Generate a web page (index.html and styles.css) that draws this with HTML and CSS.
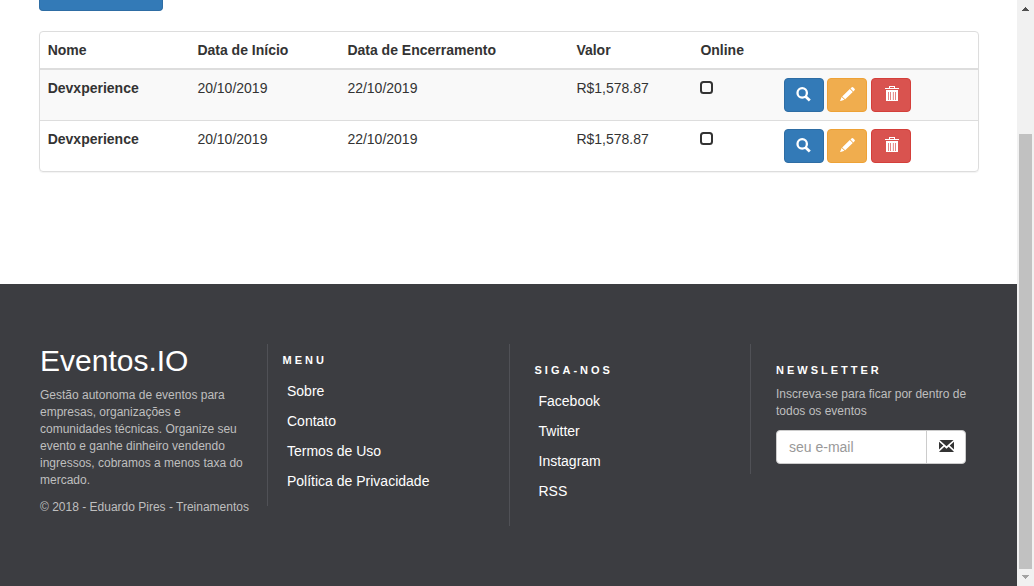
FILE: index.html
```html
<!DOCTYPE html>
<html lang="pt-BR">
<head>
<meta charset="utf-8">
<title>Eventos.IO</title>
<link rel="stylesheet" href="styles.css">
</head>
<body>
<svg class="defs" width="0" height="0">
  <symbol id="search" viewBox="0 0 15 15"><circle cx="6.2" cy="5.9" r="4.7" fill="none" stroke="currentColor" stroke-width="2.3"/><path d="M9.3 9.2L13.8 13.5" stroke="currentColor" stroke-width="2.8"/></symbol>
  <symbol id="pencil" viewBox="0 0 15 14"><path d="M11.4 0.6L12.8 0L15 2.2L14.3 3.6L13.4 4.4L10.5 1.5ZM9.8 2.1L12.8 5L5.2 12.2L2.2 9.4ZM1.6 10L4.5 12.8L0 14.2Z" fill="currentColor"/></symbol>
  <symbol id="trash" viewBox="0 0 14 15"><path d="M4 2V0H10V2H14V3H0V2ZM5 1V2H9V1ZM1 4H13V15H1ZM3 6V14H3.7V6ZM5.2 6V14H5.9V6ZM7.9 6V14H8.6V6ZM10.2 6V14H10.9V6Z" fill="currentColor" fill-rule="evenodd"/></symbol>
  <symbol id="mail" viewBox="0 0 15 12"><path d="M0.5 0H14.5L7.5 6.2ZM0 1.8L4.3 5.6L0 9.6ZM15 1.8V9.6L10.7 5.6ZM5.3 6.7L7.5 8.7L9.7 6.7L14.7 11.4V12H0.3V11.4Z" fill="currentColor"/></symbol>
</svg>
<div class="window">
  <div class="page">
    <main class="content">
      <div class="new-button"></div>
      <section class="panel">
        <div class="row head"><span>Nome</span><span>Data de Início</span><span>Data de Encerramento</span><span>Valor</span><span>Online</span><span></span></div>
        <div class="row odd"><b>Devxperience</b><span>20/10/2019</span><span>22/10/2019</span><span>R$1,578.87</span><span><i class="box"></i></span>
          <div class="actions"><a class="btn blue"><svg width="15" height="15"><use href="#search"/></svg></a><a class="btn amber"><svg width="15" height="14"><use href="#pencil"/></svg></a><a class="btn red"><svg width="14" height="15"><use href="#trash"/></svg></a></div></div>
        <div class="row even"><b>Devxperience</b><span>20/10/2019</span><span>22/10/2019</span><span>R$1,578.87</span><span><i class="box"></i></span>
          <div class="actions"><a class="btn blue"><svg width="15" height="15"><use href="#search"/></svg></a><a class="btn amber"><svg width="15" height="14"><use href="#pencil"/></svg></a><a class="btn red"><svg width="14" height="15"><use href="#trash"/></svg></a></div></div>
      </section>
    </main>
    <footer class="footer">
      <div class="about">
        <h2>Eventos.IO</h2>
        <p>Gestão autonoma de eventos para<br>empresas, organizações e<br>comunidades técnicas. Organize seu<br>evento e ganhe dinheiro vendendo<br>ingressos, cobramos a menos taxa do<br>mercado.</p>
        <p>© 2018 - Eduardo Pires - Treinamentos</p>
      </div>
      <nav class="menu"><h6>MENU</h6><a>Sobre</a><a>Contato</a><a>Termos de Uso</a><a>Política de Privacidade</a></nav>
      <nav class="social"><h6>SIGA-NOS</h6><a>Facebook</a><a>Twitter</a><a>Instagram</a><a>RSS</a></nav>
      <div class="news">
        <h6>NEWSLETTER</h6>
        <p>Inscreva-se para ficar por dentro de<br>todos os eventos</p>
        <div class="field"><span class="input">seu e-mail</span><span class="send"><svg width="15" height="12"><use href="#mail"/></svg></span></div>
      </div>
    </footer>
  </div>
  <div class="scroll"><svg width="17" height="17" shape-rendering="crispEdges"><path d="M8 7h1v1h1v1h1v1h1v1H5v-1h1v-1h1v-1h1z" fill="#505050"/></svg><div class="thumb"></div><svg width="17" height="17" shape-rendering="crispEdges"><path d="M5 6h7v1h-1v1h-1v1h-1v1H8V9H7V8H6V7H5z" fill="#a3a3a3"/></svg></div>
</div>
</body>
</html>
```
FILE: styles.css
```css
* { box-sizing: border-box; }
body { margin: 0; overflow: hidden; background: #fff; color: #333; font: 14px/20px "Liberation Sans", Arial, sans-serif; }
.defs { display: block; }
.window { display: flex; width: 1034px; height: 586px; }
.page { display: flex; flex-direction: column; width: 1017px; }
.content { height: 284px; padding: 0 38px 0 39px; }
.new-button { width: 124px; height: 11px; background: #337ab7; border: 1px solid #2e6da4; border-top: 0; border-radius: 0 0 4px 4px; }
.panel { margin-top: 20px; height: 141px; border: 1px solid #ddd; border-radius: 4px; box-shadow: 0 1px 1px rgba(0,0,0,.05); overflow: hidden; }
.row { display: grid; grid-template-columns: 149.7px 150px 229px 124px 83.3px 1fr; padding: 8px 0 0 7.7px; }
.head { height: 38px; border-bottom: 2px solid #ddd; font-weight: bold; }
.odd { height: 50px; background: #f9f9f9; }
.even { height: 51px; border-top: 1px solid #ddd; }
.box { display: block; width: 13px; height: 13px; margin-top: 3px; margin-left: -0.3px; border: 2px solid #333; border-radius: 3.5px; }
.actions { display: flex; gap: 3.5px; }
.btn { display: flex; align-items: flex-start; justify-content: center; width: 40px; height: 34px; padding-top: 8px; border: 1px solid; border-radius: 4px; }
.btn svg { color: #fff; }
.blue { background: #337ab7; border-color: #2e6da4; }
.amber { background: #f0ad4e; border-color: #eea236; }
.red { padding-top: 7px; padding-left: 3px; background: #d9534f; border-color: #d43f3a; }
.footer { flex: 1; display: grid; grid-template-columns: 227px 242px 241px 1fr; align-items: start; padding: 60px 38px 0 40px; background: #3c3d41; color: #bfbfbf; }
h2 { margin: 0 0 10px; font-size: 30px; font-weight: normal; line-height: 33px; color: #fff; }
p { margin: 0 0 10px; font-size: 12px; line-height: 17px; white-space: nowrap; }
h6 { margin: 0; font-size: 11px; line-height: 12px; letter-spacing: 3px; color: #fff; }
.menu, .social, .news { border-left: 1px solid #505156; }
.menu { height: 162px; padding: 10px 0 0 14.5px; }
.social { height: 182px; padding: 20px 0 0 24.5px; }
.news { height: 130px; padding: 20px 0 0 25px; }
nav a { display: block; height: 30px; padding-left: 4px; color: #fff; }
.menu a { padding-left: 4.5px; }
nav h6 { margin-bottom: 15px; }
.news h6 { margin-bottom: 10px; }
.field { display: flex; width: 190px; height: 34px; border: 1px solid #ccc; border-radius: 4px; background: #fff; color: #999; }
.input { width: 149px; padding: 6px 12px; }
.send { display: flex; flex: 1; align-items: center; justify-content: center; padding-bottom: 2px; border-left: 1px solid #ccc; color: #333; }
.scroll { width: 17px; background: #f1f1f1; }
.scroll svg { display: block; }
.thumb { width: 13px; height: 435px; margin: 117px 2px 0; background: #c1c1c1; }
```
